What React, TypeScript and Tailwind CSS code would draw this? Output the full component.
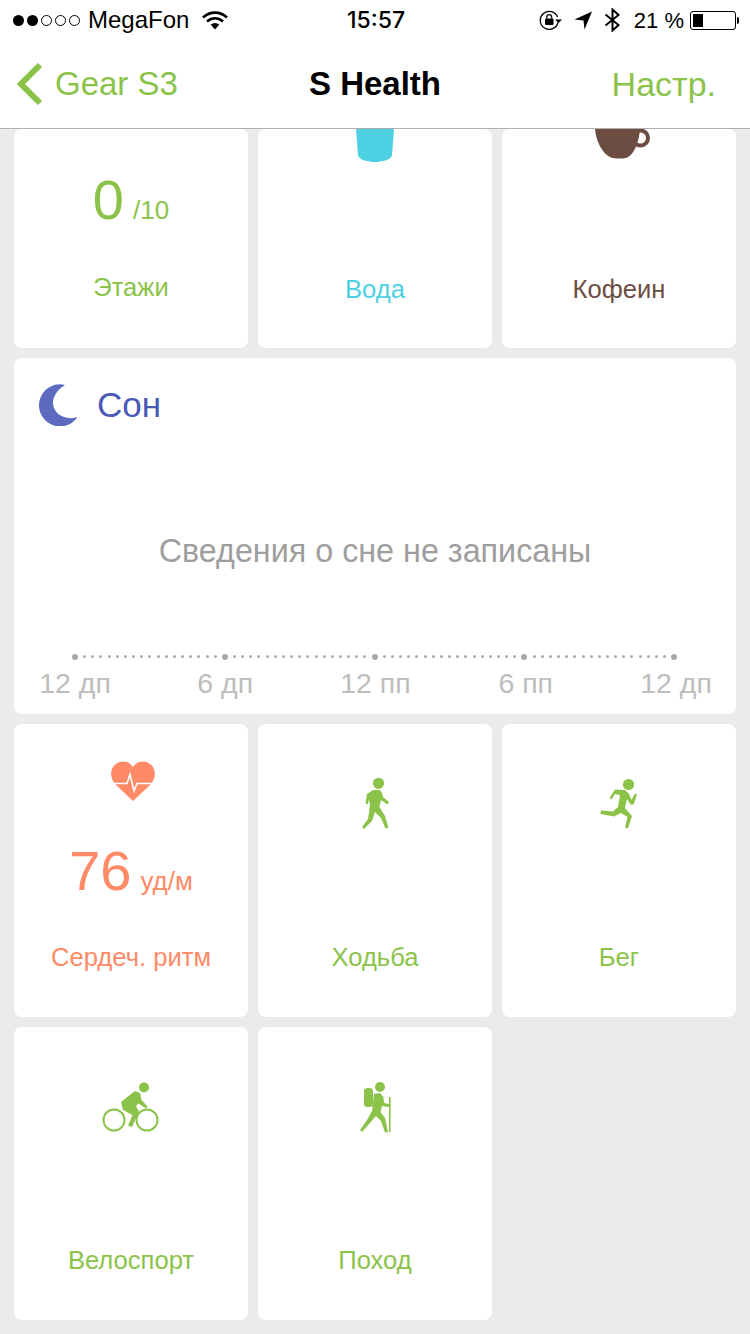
import type { ReactNode } from 'react'

const GREEN = '#8bc34a'

// ── Status bar icons ──
function Wifi() {
  return (
    <svg width="26" height="20" viewBox="0 0 26 20">
      <path d="M1 7.5C8 1 18 1 25 7.5" fill="none" stroke="#000" strokeWidth="2.6" />
      <path d="M5 11.5C10 7.3 16 7.3 21 11.5" fill="none" stroke="#000" strokeWidth="2.6" />
      <path d="M8.6 14.6C11.5 12.6 14.5 12.6 17.4 14.6L13 19.5Z" fill="#000" />
    </svg>
  )
}

function RotationLock() {
  return (
    <svg width="24" height="20" viewBox="0 0 24 20">
      <path d="M19 12.5A9 9 0 1 1 18.6 7" fill="none" stroke="#000" strokeWidth="1.3" />
      <path d="M16 9.5h7l-3.5 3.5Z" fill="#000" />
      <rect x="6" y="8.5" width="8.5" height="6.5" rx="1" fill="#000" />
      <path d="M7.8 8.5V7a2.4 2.4 0 0 1 4.8 0v1.5" fill="none" stroke="#000" strokeWidth="1.3" />
    </svg>
  )
}

function LocationArrow() {
  return (
    <svg width="19" height="19" viewBox="0 0 19 19">
      <path d="M0.5 8.5L18 0.5L10.5 18.5L9.5 9.5Z" fill="#000" />
    </svg>
  )
}

function Bluetooth() {
  return (
    <svg width="17" height="24" viewBox="0 0 17 24">
      <path d="M1.5 6.5L14.5 17L8.5 22.5V1.5L14.5 7L1.5 17.5" fill="none" stroke="#000" strokeWidth="2" />
    </svg>
  )
}

function Battery() {
  return (
    <div className="flex items-center">
      <div className="h-[19px] w-[46px] rounded-[3px] border border-black p-[2px]">
        <div className="h-full w-[10px] bg-black" />
      </div>
      <div className="ml-px h-[7px] w-[2px] rounded-r-sm bg-black" />
    </div>
  )
}

// ── Tile icons ──
function Cup() {
  return (
    <svg width="40" height="33" viewBox="0 0 40 33">
      <path d="M1 0H39L37 26C36.5 31 26 33 20 33C14 33 3.5 31 3 26Z" fill="#4dd0e1" />
    </svg>
  )
}

function Coffee() {
  return (
    <svg width="58" height="30" viewBox="0 0 58 30">
      <circle cx="45.5" cy="9" r="7.5" fill="none" stroke="#6d4c41" strokeWidth="4" />
      <path d="M0 0H45C44 12 40 24 33 28C30 30 19 30 15 28C7 24 1 12 0 0Z" fill="#6d4c41" />
    </svg>
  )
}

function Heart() {
  return (
    <svg width="80" height="60" viewBox="0 0 80 60">
      <path d="M42 51L25 35C18 28 19 18 25 14C31 10 38 11 42 17C46 11 53 10 59 14C65 18 66 28 59 35Z" fill="#ff8a65" />
      <path d="M20 33.5H36L39 24.5L43 41L46 33.5H64" fill="none" stroke="#fff" strokeWidth="1.6" />
    </svg>
  )
}

function Walker() {
  return (
    <svg width="70" height="70" viewBox="0 0 70 70" fill={GREEN}>
      <circle cx="38.5" cy="13.3" r="5.6" />
      <path d="M33 20L40 20Q42 22 43 27L49 32L47.5 34.5L41 30L39.5 37L45 46L48.5 58L45.5 58.5L41 48L35 42L32 51L24 59L22 57L28 49L30 35L29 30L27.5 34.5L25.5 33.5L27 24Z" />
    </svg>
  )
}

function Runner() {
  return (
    <svg width="60" height="70" viewBox="0 0 60 70" fill={GREEN}>
      <circle cx="39.5" cy="14.5" r="5.6" />
      <path d="M26 19.5L36 20L40 24L42.5 30L46 23.5L48 24.5L44.5 34.5L41.5 34.5L38 29L36 38L43 46L39 58.5L36 57.5L38.5 47L32 43L25 46.5L11.5 44L12 40.5L24 41.5L29 37L31 25L26 24L22.5 29.5L20.5 28Z" />
    </svg>
  )
}

function Cyclist() {
  return (
    <svg width="75" height="65" viewBox="0 0 75 65" fill={GREEN}>
      <circle cx="50" cy="12.5" r="5" />
      <circle cx="20" cy="45" r="10.5" fill="none" stroke={GREEN} strokeWidth="2" />
      <circle cx="53" cy="45" r="10.5" fill="none" stroke={GREEN} strokeWidth="2" />
      <path d="M41 16L46 18L47.5 25L53.5 31.5L52 33.5L44.5 28.5L42 31L45 36.5L38 52L34 50.5L38.5 40L29 35L27 27Z" />
    </svg>
  )
}

function Hiker() {
  return (
    <svg width="60" height="65" viewBox="0 0 60 65" fill={GREEN}>
      <circle cx="35" cy="12" r="5" />
      <rect x="19" y="13" width="9" height="19" rx="3.5" />
      <path d="M29 19L35 18L38.5 22L39 28L44 29L44 32L37 31L35.5 37L40 43L43 57L40 57.5L36 46L31 41L25 48L17 57L15 55L22 45L27 36Z" />
      <rect x="44" y="22" width="1.6" height="35" />
    </svg>
  )
}

// ── Sleep timeline: big dot every 6 hours, 17 small dots between ──
function Timeline() {
  const dots = Array.from({ length: 73 }, (_, i) => i)
  return (
    <div className="mx-[58px] flex h-[7px] items-center justify-between">
      {dots.map(i =>
        i % 18 === 0 ? (
          <span key={i} className="h-[6px] w-[6px] rounded-full bg-[#a8a8a8]" />
        ) : (
          <span key={i} className="h-[3px] w-[3px] rounded-full bg-[#ababab]" />
        ),
      )}
    </div>
  )
}

function Tile({ top, slot, icon, label, color, children }: {
  top: number
  slot: number
  icon?: ReactNode
  label: string
  color: string
  children?: ReactNode
}) {
  return (
    <div className="flex flex-col items-center rounded-lg bg-white" style={{ height: top === 0 ? 219 : 293 }}>
      <div className="flex w-full flex-col items-center" style={{ height: slot, paddingTop: top }}>
        {icon}
        {children}
      </div>
      <p className="text-[25.6px] leading-[30px]" style={{ color }}>{label}</p>
    </div>
  )
}

export default function App() {
  const hours = ['12 дп', '6 дп', '12 пп', '6 пп', '12 дп']

  return (
    <div className="h-[1334px] overflow-hidden bg-[#ebebeb] font-['Liberation_Sans',sans-serif] text-black">
      <header className="border-b border-[#b0b0b0] bg-white">
        <div className="flex h-[40px] items-center justify-between pl-[13px] pr-[11px] text-[24px]">
          <div className="flex w-[300px] items-center">
            <div className="flex gap-[3px]">
              <span className="h-[11px] w-[11px] rounded-full bg-black" />
              <span className="h-[11px] w-[11px] rounded-full bg-black" />
              <span className="h-[11px] w-[11px] rounded-full border border-black" />
              <span className="h-[11px] w-[11px] rounded-full border border-black" />
              <span className="h-[11px] w-[11px] rounded-full border border-black" />
            </div>
            <span className="ml-[8px]">MegaFon</span>
            <span className="ml-[13px]"><Wifi /></span>
          </div>
          <span className="font-['Inter',sans-serif] text-[23px] font-medium">15:57</span>
          <div className="flex w-[300px] items-center justify-end">
            <RotationLock />
            <span className="ml-[11px]"><LocationArrow /></span>
            <span className="ml-[11px]"><Bluetooth /></span>
            <span className="ml-[13px] text-[22px]">21 %</span>
            <span className="ml-[6px]"><Battery /></span>
          </div>
        </div>
        <div className="grid h-[88px] grid-cols-[1fr_auto_1fr] items-center px-[16px]" style={{ color: GREEN }}>
          <div className="flex items-center gap-[12px] text-[33px]">
            <svg width="27" height="44" viewBox="0 0 27 44">
              <path d="M24 3L5 22L24 41" fill="none" stroke={GREEN} strokeWidth="6" />
            </svg>
            <span>Gear S3</span>
          </div>
          <span className="text-[33px] font-bold text-black">S Health</span>
          <span className="mr-[18px] text-right text-[34px]">Настр.</span>
        </div>
      </header>

      <main className="grid grid-cols-3 gap-[10px] px-[14px]">
        <Tile top={0} slot={143} label="Этажи" color={GREEN}>
          <div className="mt-[41px] flex items-baseline" style={{ color: GREEN }}>
            <span className="text-[56px] leading-[60px]">0</span>
            <span className="ml-[9px] text-[26px]">/10</span>
          </div>
        </Tile>
        <Tile top={0} slot={145} icon={<Cup />} label="Вода" color="#4dd0e1" />
        <Tile top={0} slot={145} icon={<div className="pl-[10px]"><Coffee /></div>} label="Кофеин" color="#6d4c41" />

        <section className="col-span-3 flex h-[356px] flex-col rounded-lg bg-white">
          <div className="flex items-center pl-[25px] pt-[26px]">
            <svg width="40" height="42" viewBox="0 0 40 42">
              <path d="M26 1A21 21 0 1 0 38.5 33C27 37 14 30 14 19C14 12 19 5 26 1Z" fill="#5c6bc0" />
            </svg>
            <span className="ml-[18px] text-[35px] leading-[40px] text-[#4b5ab5]">Сон</span>
          </div>
          <p className="mt-[107px] text-center text-[32.3px] leading-[36px] text-[#9e9e9e]">Сведения о сне не записаны</p>
          <div className="mt-[84px]">
            <Timeline />
          </div>
          <div className="mt-[5px] flex justify-between pl-[1px] text-[28.5px] leading-[36px] text-[#bdbdbd]">
            {hours.map((h, i) => (
              <span key={i} className="w-[120px] text-center">{h}</span>
            ))}
          </div>
        </section>

        <Tile top={26} slot={218} label="Сердеч. ритм" color="#ff8a65">
          <div className="-mb-[60px]"><Heart /></div>
          <div className="mt-[91px] flex items-baseline text-[#ff8a65]">
            <span className="text-[56px] leading-[60px]">76</span>
            <span className="ml-[9px] text-[26px]">уд/м</span>
          </div>
        </Tile>
        <Tile top={46} slot={218} icon={<Walker />} label="Ходьба" color={GREEN} />
        <Tile top={46} slot={218} icon={<Runner />} label="Бег" color={GREEN} />
        <Tile top={48} slot={218} icon={<Cyclist />} label="Велоспорт" color={GREEN} />
        <Tile top={48} slot={218} icon={<Hiker />} label="Поход" color={GREEN} />
      </main>
    </div>
  )
}
